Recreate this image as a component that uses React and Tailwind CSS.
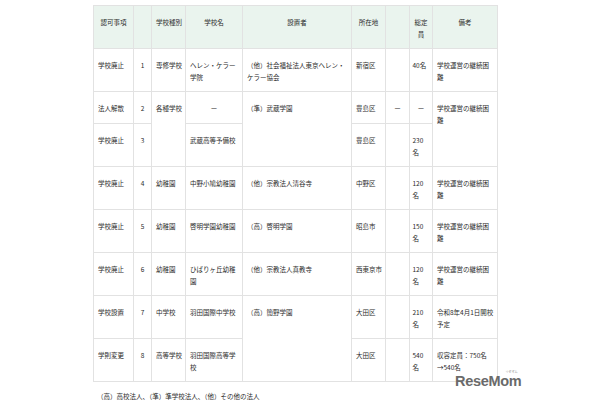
const cell = "border border-[#e2e2e2] align-top pt-[11px] px-[4px] whitespace-nowrap";

const rows = [
  {
    h: "h-[43px]",
    cells: [
      { t: ["学校廃止"] },
      { t: ["1"], c: true },
      { t: ["専修学校"] },
      { t: ["ヘレン・ケラー", "学院"] },
      { t: ["（他）社会福祉法人東京ヘレン・", "ケラー協会"] },
      { t: ["新宿区"] },
      { t: [""] },
      { t: ["40名"], n: true },
      { t: ["学校運営の継続困", "難"] },
    ],
  },
  {
    h: "h-[32px]",
    cells: [
      { t: ["法人解散"] },
      { t: ["2"], c: true },
      { t: ["各種学校"], rs: 2 },
      { t: ["ー"], c: true },
      { t: ["（準）武蔵学園"], rs: 2 },
      { t: ["豊島区"] },
      { t: ["ー"], c: true },
      { t: ["ー"], c: true },
      { t: ["学校運営の継続困", "難"], rs: 2 },
    ],
  },
  {
    h: "h-[43px]",
    cells: [
      { t: ["学校廃止"] },
      { t: ["3"], c: true },
      { t: ["武蔵高等予備校"] },
      { t: ["豊島区"] },
      { t: [""] },
      { t: ["230", "名"], n: true },
    ],
  },
  {
    h: "h-[43px]",
    cells: [
      { t: ["学校廃止"] },
      { t: ["4"], c: true },
      { t: ["幼稚園"] },
      { t: ["中野小鳩幼稚園"] },
      { t: ["（他）宗教法人清谷寺"] },
      { t: ["中野区"] },
      { t: [""] },
      { t: ["120", "名"], n: true },
      { t: ["学校運営の継続困", "難"] },
    ],
  },
  {
    h: "h-[43px]",
    cells: [
      { t: ["学校廃止"] },
      { t: ["5"], c: true },
      { t: ["幼稚園"] },
      { t: ["啓明学園幼稚園"] },
      { t: ["（高）啓明学園"] },
      { t: ["昭島市"] },
      { t: [""] },
      { t: ["150", "名"], n: true },
      { t: ["学校運営の継続困", "難"] },
    ],
  },
  {
    h: "h-[43px]",
    cells: [
      { t: ["学校廃止"] },
      { t: ["6"], c: true },
      { t: ["幼稚園"] },
      { t: ["ひばりヶ丘幼稚", "園"] },
      { t: ["（他）宗教法人真教寺"] },
      { t: ["西東京市"] },
      { t: [""] },
      { t: ["120", "名"], n: true },
      { t: ["学校運営の継続困", "難"] },
    ],
  },
  {
    h: "h-[43px]",
    cells: [
      { t: ["学校設置"] },
      { t: ["7"], c: true },
      { t: ["中学校"] },
      { t: ["羽田国際中学校"] },
      { t: ["（高）簡野学園"], rs: 2 },
      { t: ["大田区"] },
      { t: [""] },
      { t: ["210", "名"], n: true },
      { t: ["令和8年4月1日開校", "予定"] },
    ],
  },
  {
    h: "h-[43px]",
    cells: [
      { t: ["学則変更"] },
      { t: ["8"], c: true },
      { t: ["高等学校"] },
      { t: ["羽田国際高等学", "校"] },
      { t: ["大田区"] },
      { t: [""] },
      { t: ["540", "名"], n: true },
      { t: ["収容定員：750名", "→540名"] },
    ],
  },
];

function Lines({ t }) {
  return t.map((s, i) => (
    <span key={i}>
      {i > 0 && <br />}
      {s}
    </span>
  ));
}

export default function App() {
  return (
    <div
      className="relative w-[610px] h-[400px] overflow-hidden bg-white text-[#2b2b2b] text-[6.5px] leading-[11.5px]"
      style={{ fontFamily: '"Noto Sans CJK JP", "Noto Sans", sans-serif' }}
    >
      <div className="pl-[93px] pt-[5px]">
        <table className="table-fixed w-[404px]">
          <colgroup>
            <col className="w-[40px]" />
            <col className="w-[18px]" />
            <col className="w-[34px]" />
            <col className="w-[57px]" />
            <col className="w-[109px]" />
            <col className="w-[34px]" />
            <col className="w-[24px]" />
            <col className="w-[23px]" />
            <col className="w-[65px]" />
          </colgroup>
          <thead>
            <tr className="h-[43px] bg-[#eaf4ee]">
              <th className={`${cell} font-normal text-center`}>認可事項</th>
              <th className={`${cell} font-normal`}></th>
              <th className={`${cell} font-normal text-center`}>学校種別</th>
              <th className={`${cell} font-normal text-center`}>学校名</th>
              <th className={`${cell} font-normal text-center`}>設置者</th>
              <th className={`${cell} font-normal text-center`}>所在地</th>
              <th className={`${cell} font-normal`}></th>
              <th className={`${cell} font-normal text-center`}>
                総定<br />員
              </th>
              <th className={`${cell} font-normal text-center`}>備考</th>
            </tr>
          </thead>
          <tbody>
            {rows.map((r, i) => (
              <tr key={i} className={r.h}>
                {r.cells.map((c, j) => (
                  <td
                    key={j}
                    rowSpan={c.rs || 1}
                    className={`${cell} ${c.c ? "text-center" : "text-left"} ${c.n ? "pl-[2.5px] pr-0" : ""}`}
                  >
                    <Lines t={c.t} />
                  </td>
                ))}
              </tr>
            ))}
          </tbody>
        </table>
        <p className="mt-[9px] pl-[4px]">（高）高校法人、（準）準学校法人、（他）その他の法人</p>
      </div>

      <div className="absolute left-[455px] top-[373px]">
        <div className="relative">
          <span
            className="block text-[14.5px] leading-[16px] font-bold tracking-[-0.3px] text-[#6a6a6a]"
            style={{ fontFamily: '"Liberation Sans", Arial, sans-serif' }}
          >
            ReseMom
          </span>
          <span className="absolute right-[4px] -top-[2px] text-[3px] leading-[3px] text-[#8a8a8a]">
            リセマム
          </span>
        </div>
      </div>
    </div>
  );
}
